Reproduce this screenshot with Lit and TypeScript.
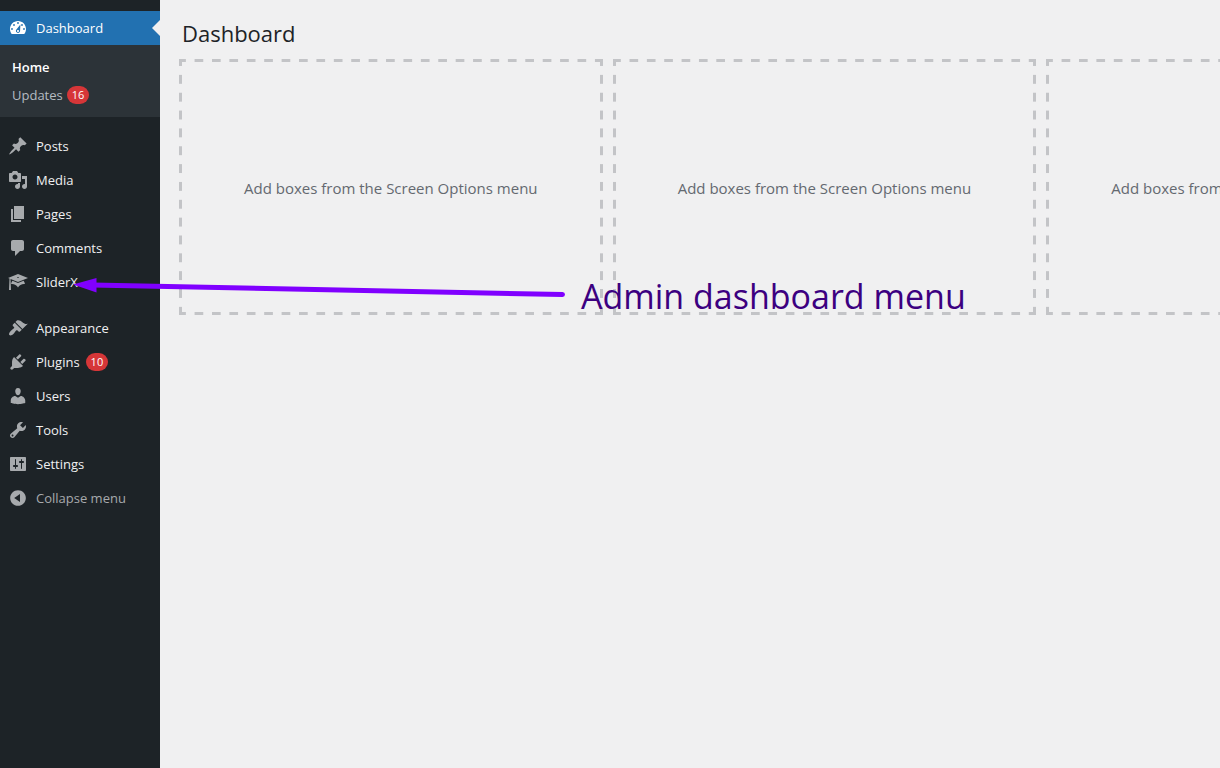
import { LitElement, html, css, svg, nothing } from "lit";
import { customElement } from "lit/decorators.js";
import { classMap } from "lit/directives/class-map.js";

interface MenuItem {
  label: string;
  icon: string;
  count?: number;
  active?: boolean;
}

const ICONS: Record<string, string> = {
  dashboard:
    "M3.76 16h12.48C17.34 14.63 18 12.9 18 11c0-4.41-3.58-8-8-8s-8 3.59-8 8c0 1.9.66 3.63 1.76 5zM9.1 5a.9.9 0 1 1 1.8 0a.9.9 0 1 1-1.8 0zM5.1 7a.9.9 0 1 1 1.8 0a.9.9 0 1 1-1.8 0zM13.1 7a.9.9 0 1 1 1.8 0a.9.9 0 1 1-1.8 0zM3.1 11a.9.9 0 1 1 1.8 0a.9.9 0 1 1-1.8 0zM15.1 11a.9.9 0 1 1 1.8 0a.9.9 0 1 1-1.8 0zM12.4 6.400L8.600 11.200c-.9.9-.9 2.300 0 3.100.8.8 2.100.8 2.900 0 .5-.5.6-1.100.6-1.700zM10 12c.6 0 1 .4 1 1s-.4 1-1 1-1-.4-1-1 .4-1 1-1z",
  post: "M10.44 3.02l1.82-1.82 6.36 6.35-1.83 1.82c-1.05-.68-2.48-.57-3.41.36l-.75.75c-.92.93-1.04 2.35-.35 3.41l-1.83 1.82-2.41-2.41-2.8 2.79c-.42.42-3.38 2.71-3.8 2.29s1.86-3.39 2.28-3.81l2.79-2.79L4.1 9.36l1.83-1.82c1.05.69 2.48.57 3.4-.36l.75-.75c.93-.92 1.05-2.35.36-3.41z",
  media:
    "M13 11V4c0-.55-.45-1-1-1h-1.67L9 1H5L3.67 3H2c-.55 0-1 .45-1 1v7c0 .55.45 1 1 1h10c.55 0 1-.45 1-1zM7 4.5c1.38 0 2.5 1.12 2.5 2.5S8.38 9.5 7 9.5 4.5 8.38 4.5 7 5.62 4.5 7 4.5zM14 6h5v10.5c0 1.38-1.12 2.5-2.5 2.5S14 17.88 14 16.5s1.12-2.5 2.5-2.5c.17 0 .34.02.5.05V9h-3V6zm-4 8.05V13h2v3.5c0 1.38-1.12 2.5-2.5 2.5S7 17.88 7 16.5 8.12 14 9.5 14c.17 0 .34.02.5.05z",
  page: "M6 15V2h10v13H6zm-1 1h8v2H3V5h2v11z",
  comments:
    "M5 2h9c1.1 0 2 .9 2 2v7c0 1.1-.9 2-2 2h-2l-5 5v-5H5c-1.1 0-2-.9-2-2V4c0-1.1.9-2 2-2z",
  learn:
    "M10 10L2.54 7.02 3 18H1l.48-11.41L0 6l10-4 10 4zm0-5c-.55 0-1 .22-1 .5s.45.5 1 .5 1-.22 1-.5-.45-.5-1-.5zm0 6l5.57-2.23c.71.94 1.2 2.07 1.36 3.3-.3-.04-.61-.07-.93-.07-2.55 0-4.78 1.37-6 3.41C8.78 13.37 6.55 12 4 12c-.32 0-.63.03-.93.07.16-1.23.65-2.36 1.36-3.3z",
  appearance:
    "M14.48 11.06L7.41 3.99l1.5-1.5c.5-.56 2.3-.47 3.51.32 1.21.8 1.43 1.28 2.91 2.1 1.18.64 2.45 1.26 4.45.85zm-.71.71L6.7 4.7 4.93 6.47c-.39.39-.39 1.02 0 1.41l1.06 1.06c.39.39.39 1.03 0 1.42-.6.6-1.43 1.11-2.21 1.69-.35.26-.7.53-1.01.84C1.43 14.23.4 16.08 1.4 17.07c.99 1 2.84-.03 4.18-1.36.31-.31.58-.66.85-1.02.57-.78 1.08-1.61 1.69-2.21.39-.39 1.02-.39 1.41 0l1.06 1.06c.39.39 1.02.39 1.41 0z",
  plugins:
    "M13.11 4.36L9.87 7.6 8 5.73l3.24-3.24c.35-.34 1.05-.2 1.56.32.52.51.66 1.21.31 1.55zm-8 1.77l.91-1.12 9.01 9.01-1.19.84c-.71.71-2.63 1.16-3.82 1.16H6.14L4.9 17.26c-.59.59-1.54.59-2.12 0-.59-.58-.59-1.53 0-2.12l1.24-1.24v-3.88c0-1.13.4-3.19 1.09-3.89zm7.26 3.97l3.24-3.24c.34-.35 1.04-.21 1.55.31.52.51.66 1.21.31 1.55l-3.24 3.25z",
  users:
    "M10 9.25c-2.27 0-2.73-3.44-2.73-3.44C7 4.02 7.82 2 9.97 2c2.16 0 2.98 2.02 2.71 3.81 0 0-.41 3.44-2.68 3.44zm0 2.57L12.72 10c2.39 0 4.52 2.33 4.52 4.53v2.49s-3.65 1.13-7.24 1.13c-3.65 0-7.24-1.13-7.24-1.13v-2.49c0-2.25 1.94-4.48 4.47-4.48z",
  tools:
    "M16.68 9.77c-1.34 1.34-3.3 1.67-4.95.99l-5.41 6.52c-.99.99-2.59.99-3.58 0s-.99-2.59 0-3.57l6.52-5.42c-.68-1.65-.35-3.61.99-4.95 1.28-1.28 3.12-1.62 4.72-1.06l-2.89 2.89 2.82 2.82 2.86-2.87c.53 1.58.18 3.39-1.08 4.65zM3.81 16.21c.4.39 1.04.39 1.43 0 .4-.4.4-1.04 0-1.43-.39-.4-1.03-.4-1.43 0-.39.39-.39 1.03 0 1.43z",
  settings:
    "M18 16V4c0-.55-.45-1-1-1H3c-.55 0-1 .45-1 1v12c0 .55.45 1 1 1h14c.55 0 1-.45 1-1zM8 11h1c.55 0 1 .45 1 1s-.45 1-1 1H8v1.5c0 .28-.22.5-.5.5s-.5-.22-.5-.5V13H6c-.55 0-1-.45-1-1s.45-1 1-1h1V5.5c0-.28.22-.5.5-.5s.5.22.5.5V11zm5-2h-1c-.55 0-1-.45-1-1s.45-1 1-1h1V5.5c0-.28.22-.5.5-.5s.5.22.5.5V7h1c.55 0 1 .45 1 1s-.45 1-1 1h-1v5.5c0 .28-.22.5-.5.5s-.5-.22-.5-.5V9z",
  collapse:
    "M10 2.16c4.33 0 7.84 3.51 7.84 7.84s-3.51 7.84-7.84 7.84S2.16 14.33 2.16 10 5.71 2.16 10 2.16zm2 11.72V6.12L6.18 9.97z",
};

const CONTENT_ITEMS: MenuItem[] = [
  { label: "Posts", icon: "post" },
  { label: "Media", icon: "media" },
  { label: "Pages", icon: "page" },
  { label: "Comments", icon: "comments" },
  { label: "SliderX", icon: "learn" },
];

const ADMIN_ITEMS: MenuItem[] = [
  { label: "Appearance", icon: "appearance" },
  { label: "Plugins", icon: "plugins", count: 10 },
  { label: "Users", icon: "users" },
  { label: "Tools", icon: "tools" },
  { label: "Settings", icon: "settings" },
];

const icon = (name: string) => html`<svg class="icon" viewBox="0 0 20 20" aria-hidden="true">
  ${svg`<path fill-rule="evenodd" d=${ICONS[name]}></path>`}
</svg>`;

@customElement("admin-menu")
class AdminMenu extends LitElement {
  static styles = css`
    :host {
      display: block;
      padding-top: 11px;
      background: #1d2327;
      font-size: 13px;
      line-height: 18px;
    }
    ul {
      margin: 0;
      padding: 0;
      list-style: none;
    }
    .group {
      padding-top: 12px;
    }
    .item {
      position: relative;
      display: flex;
      align-items: center;
      gap: 8px;
      box-sizing: border-box;
      width: 100%;
      height: 34px;
      padding: 0 8px;
      border: 0;
      background: none;
      color: #f0f0f1;
      font: inherit;
      text-align: left;
      text-decoration: none;
    }
    .icon {
      flex: none;
      width: 20px;
      height: 20px;
      fill: #a7aaad;
    }
    .active {
      background: #2271b1;
      color: #fff;
    }
    .active .icon {
      fill: #fff;
    }
    .active::after {
      content: "";
      position: absolute;
      right: 0;
      top: 9px;
      border: 8px solid transparent;
      border-left-width: 0;
      border-right-color: #f0f0f1;
    }
    .submenu {
      padding: 8px 0;
      background: #2c3338;
    }
    .sub {
      display: flex;
      align-items: center;
      gap: 4px;
      height: 28px;
      padding: 0 12px;
      color: #b5bcc2;
      text-decoration: none;
    }
    .current {
      color: #fff;
      font-weight: 600;
    }
    .count {
      box-sizing: border-box;
      min-width: 22px;
      padding: 0 5px;
      border-radius: 9px;
      background: #d63638;
      color: #fff;
      font-size: 11px;
      text-align: center;
    }
    .item .count {
      margin-left: -2px;
    }
    .collapse {
      color: #a7aaad;
    }
  `;

  private renderItem(item: MenuItem) {
    return html`<li>
      <a class=${classMap({ item: true, active: !!item.active })} href="#">
        ${icon(item.icon)}<span>${item.label}</span>
        ${item.count ? html`<span class="count">${item.count}</span>` : nothing}
      </a>
    </li>`;
  }

  render() {
    return html`<nav aria-label="Main menu">
      <ul>
        ${this.renderItem({ label: "Dashboard", icon: "dashboard", active: true })}
      </ul>
      <ul class="submenu">
        <li><a class="sub current" href="#">Home</a></li>
        <li><a class="sub" href="#"><span>Updates</span><span class="count">16</span></a></li>
      </ul>
      <ul class="group">
        ${CONTENT_ITEMS.map((i) => this.renderItem(i))}
      </ul>
      <ul class="group">
        ${ADMIN_ITEMS.map((i) => this.renderItem(i))}
        <li>
          <button class="item collapse" type="button">
            ${icon("collapse")}<span>Collapse menu</span>
          </button>
        </li>
      </ul>
    </nav>`;
  }
}

@customElement("app-root")
class AppRoot extends LitElement {
  static styles = css`
    :host {
      position: relative;
      display: grid;
      grid-template-columns: 160px minmax(0, 1fr);
      min-height: 100vh;
      overflow: hidden;
      background: #f0f0f1;
      color: #1d2327;
      font-family: "Open Sans", "Noto Sans", sans-serif;
    }
    main {
      padding: 17px 0 0 19px;
    }
    h1 {
      margin: 0 0 10px 3px;
      font-size: 22px;
      line-height: 32px;
      font-weight: 400;
    }
    .boards {
      display: grid;
      grid-template-columns: repeat(3, 1fr);
      gap: 10px;
      width: 124%;
    }
    /* Long dashes: each tile holds half a dash at either end, repeated along one edge. */
    .board {
      --dash-x: linear-gradient(90deg, #c3c4c7 25%, transparent 25% 75%, #c3c4c7 75%);
      --dash-y: linear-gradient(#c3c4c7 25%, transparent 25% 75%, #c3c4c7 75%);
      display: grid;
      place-items: center;
      min-height: 250px;
      border: 3px solid transparent;
      background-image: var(--dash-x), var(--dash-x), var(--dash-y), var(--dash-y);
      background-origin: padding-box;
      background-clip: border-box;
      background-size: calc(100% / 24) 3px, calc(100% / 24) 3px, 3px calc(100% / 14), 3px calc(100% / 14);
      background-position: left 0 top -3px, left 0 bottom -3px, left -3px top 0, right -3px top 0;
      background-repeat: repeat no-repeat, repeat no-repeat, no-repeat repeat, no-repeat repeat;
      color: #646970;
      font-size: 15px;
      line-height: 20px;
    }
    .board span {
      padding-top: 2px;
    }
    .arrow {
      position: absolute;
      left: 72px;
      top: 276px;
      width: 494px;
      height: 24px;
    }
    .note {
      position: absolute;
      left: 581px;
      top: 272px;
      color: #3c0080;
      font-size: 34px;
      line-height: 48px;
      white-space: nowrap;
    }
  `;

  render() {
    return html`
      <admin-menu></admin-menu>
      <main>
        <h1>Dashboard</h1>
        <div class="boards">
          ${[1, 2, 3].map(
            () => html`<section class="board"><span>Add boxes from the Screen Options menu</span></section>`
          )}
        </div>
      </main>
      <svg class="arrow" viewBox="0 0 494 24" aria-hidden="true">
        <path d="M20 9L490.5 18.5" fill="none" stroke="#8000ff" stroke-width="5" stroke-linecap="round"></path>
        <path d="M1 8.5L24.500 2v14.500z" fill="#8000ff"></path>
      </svg>
      <div class="note">Admin dashboard menu</div>
    `;
  }
}
